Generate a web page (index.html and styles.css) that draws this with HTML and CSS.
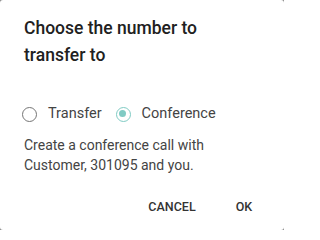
FILE: index.html
```html
<!DOCTYPE html>
<html>
<head>
<meta charset="utf-8">
<link rel="stylesheet" href="styles.css">
</head>
<body>
<div class="frame">
<div class="dialog">
  <h2 class="title">Choose the number to transfer to</h2>
  <div class="content">
    <div class="radios">
      <label class="radio"><span class="dot"></span><span class="label">Transfer</span></label>
      <label class="radio checked"><span class="dot"></span><span class="label">Conference</span></label>
    </div>
    <p class="desc">Create a conference call with Customer, 301095 and you.</p>
  </div>
  <div class="actions">
    <button class="btn">Cancel</button>
    <button class="btn">OK</button>
  </div>
</div>
</div>
</body>
</html>
```
FILE: styles.css
```css
html, body {
  margin: 0;
  padding: 0;
  background: #fff;
}
.frame {
  width: 284px;
  height: 230px;
  background: #8a8a8a;
}
.dialog {
  width: 284px;
  height: 230px;
  background: #fff;
  border-radius: 3px;
  display: flex;
  flex-direction: column;
  font-family: Roboto, "Liberation Sans", sans-serif;
  box-sizing: border-box;
}
.title {
  margin: 0;
  padding: 15px 40px 0 24px;
  font-size: 17.5px;
  font-weight: 500;
  line-height: 27px;
  color: #212121;
}
.content {
  padding: 35px 24px 0;
}
.radios {
  display: flex;
  align-items: center;
  gap: 16px;
  height: 20px;
}
.radio {
  display: flex;
  align-items: center;
  margin-left: -2px;
  font-size: 14.5px;
  line-height: 20px;
  color: #444;
}
.dot {
  width: 15px;
  height: 15px;
  box-sizing: border-box;
  border: 1.7px solid #757575;
  border-radius: 50%;
  margin-right: 11px;
  position: relative;
}
.radio.checked .dot {
  border-color: #80cbc4;
}
.radio.checked .dot::after {
  content: "";
  position: absolute;
  left: 2.3px;
  top: 2.3px;
  width: 7px;
  height: 7px;
  border-radius: 50%;
  background: #80cbc4;
}
.desc {
  margin: 11px 0 0;
  font-size: 14px;
  line-height: 20px;
  color: #444;
}
.actions {
  display: flex;
  justify-content: flex-end;
  gap: 8px;
  padding: 0 8px;
  margin-top: 13px;
}
.btn {
  min-width: 64px;
  height: 36px;
  padding: 0 8px;
  border: none;
  background: transparent;
  font-family: Roboto, "Liberation Sans", sans-serif;
  font-size: 12.5px;
  font-weight: 500;
  text-transform: uppercase;
  color: #333;
}
```
